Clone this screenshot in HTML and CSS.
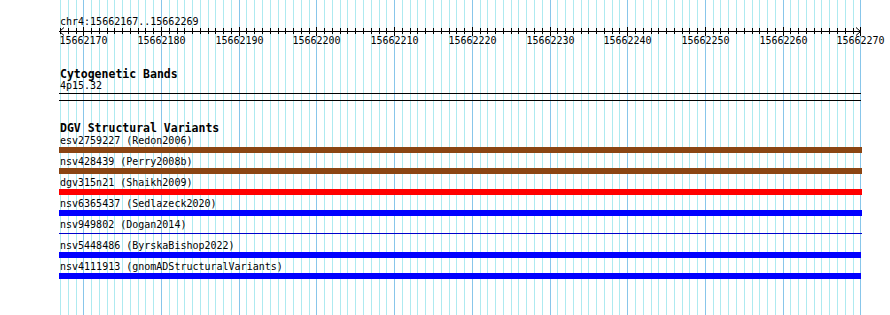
FILE: index.html
```html
<!DOCTYPE html>
<html>
<head>
<meta charset="utf-8">
<title>Genome view</title>
<link rel="stylesheet" href="styles.css">
</head>
<body>
<div class="view">
  <svg class="grid" id="grid" width="890" height="315"></svg>
  <div class="content">
    <div class="loc">chr4:15662167..15662269</div>
    <svg class="ruler" id="ruler" width="831" height="20">
      <line class="axis" x1="0" y1="5.5" x2="802" y2="5.5"></line>
      <polyline class="arrow" points="5,1.5 0.5,5.5 5,9.5"></polyline>
      <polyline class="arrow" points="797,1.5 801.5,5.5 797,9.5"></polyline>
    </svg>
    <section class="track cyto">
      <div class="track-title">Cytogenetic Bands</div>
      <div class="band-label">4p15.32</div>
      <div class="band-line first"></div>
      <div class="band-line second"></div>
    </section>
    <section class="track dgv">
      <div class="track-title">DGV Structural Variants</div>
      <div class="feat"><div class="feat-label">esv2759227 (Redon2006)</div><div class="bar brown"></div></div>
      <div class="feat"><div class="feat-label">nsv428439 (Perry2008b)</div><div class="bar brown"></div></div>
      <div class="feat"><div class="feat-label">dgv315n21 (Shaikh2009)</div><div class="bar red"></div></div>
      <div class="feat"><div class="feat-label">nsv6365437 (Sedlazeck2020)</div><div class="bar blue"></div></div>
      <div class="feat"><div class="feat-label">nsv949802 (Dogan2014)</div><div class="bar hairline"></div></div>
      <div class="feat"><div class="feat-label">nsv5448486 (ByrskaBishop2022)</div><div class="bar blue short"></div></div>
      <div class="feat"><div class="feat-label">nsv4111913 (gnomADStructuralVariants)</div><div class="bar blue short"></div></div>
    </section>
  </div>
</div>
<script src="script.js"></script>
</body>
</html>
```

FILE: styles.css
```css
html, body {
  margin: 0;
  padding: 0;
  background: #fff;
}
.view {
  position: relative;
  width: 890px;
  height: 315px;
  overflow: hidden;
  font-family: "DejaVu Sans Mono", monospace;
  color: #000;
}
.grid {
  position: absolute;
  left: 0;
  top: 0;
}
.grid .gl {
  stroke: #aeeaf0;
  stroke-width: 1;
}
.grid .gl.major {
  stroke: #88c6ea;
}
.content {
  position: relative;
  padding: 15px 0 0 59px;
}
.loc {
  height: 11px;
  line-height: 13px;
  font-size: 10px;
  padding-left: 1px;
  white-space: nowrap;
}
.ruler {
  display: block;
  overflow: visible;
}
.ruler .axis,
.ruler .tick {
  stroke: #000;
  stroke-width: 1;
}
.ruler .arrow {
  fill: none;
  stroke: #000;
  stroke-width: 1;
}
.ruler .tick-label {
  font-family: "DejaVu Sans Mono", monospace;
  font-size: 10px;
  text-anchor: middle;
  fill: #000;
}
.track-title {
  font-weight: bold;
  font-size: 11.5px;
  padding-left: 1px;
  white-space: nowrap;
}
.cyto .track-title {
  margin-top: 22px;
  height: 13px;
  line-height: 13px;
}
.band-label {
  font-size: 10px;
  line-height: 10px;
  height: 10px;
  padding-left: 1px;
}
.band-line {
  width: 802px;
  height: 1px;
  background: #000;
}
.band-line.first {
  margin-top: 2px;
}
.band-line.second {
  margin-top: 6px;
}
.dgv .track-title {
  margin-top: 20px;
  height: 13px;
  line-height: 14px;
}
.feat {
  height: 21px;
}
.feat-label {
  font-size: 10px;
  line-height: 13px;
  height: 13px;
  padding-left: 1px;
  white-space: nowrap;
}
.bar {
  height: 6px;
  width: 803px;
}
.bar.short {
  width: 802px;
}
.bar.brown {
  background: #8b4513;
}
.bar.red {
  background: #ff0000;
}
.bar.blue {
  background: #0000ff;
}
.bar.hairline {
  height: 1px;
  margin-top: 2px;
  background: #0000cc;
}
```

FILE: script.js
```js
(function () {
  var NS = 'http://www.w3.org/2000/svg';
  var start = 15662167, count = 104, x0 = 60, scale = 7.77, rulerLeft = 59;
  var grid = document.getElementById('grid');
  var ruler = document.getElementById('ruler');
  function el(tag, attrs, parent) {
    var e = document.createElementNS(NS, tag);
    for (var k in attrs) e.setAttribute(k, attrs[k]);
    parent.appendChild(e);
    return e;
  }
  for (var k = 0; k < count; k++) {
    var bp = start + k;
    var x = Math.round(x0 + k * scale) + 0.5;
    var major = bp % 10 === 0;
    el('line', { x1: x, x2: x, y1: 0, y2: 315, 'class': major ? 'gl major' : 'gl' }, grid);
    var rx = x - rulerLeft;
    el('line', { x1: rx, x2: rx, y1: major ? 1 : 2, y2: major ? 10 : 8, 'class': 'tick' }, ruler);
    if (major) {
      var t = el('text', { x: rx, y: 17.5, 'class': 'tick-label' }, ruler);
      t.textContent = String(bp);
    }
  }
})();
```
